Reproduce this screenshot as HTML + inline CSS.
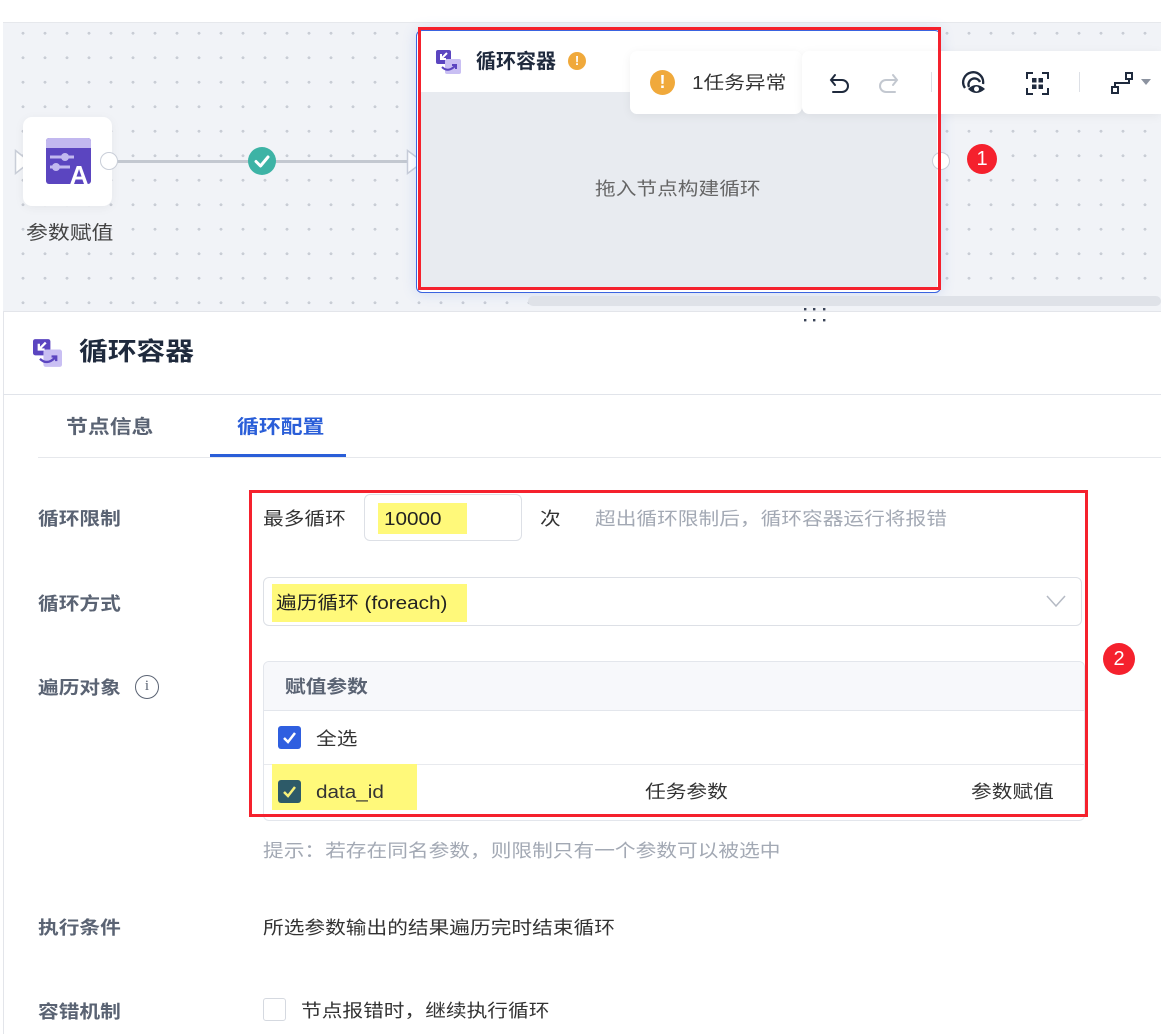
<!DOCTYPE html>
<html><head><meta charset="utf-8">
<style>
*{margin:0;padding:0;box-sizing:border-box}
body{width:1161px;height:1034px;overflow:hidden;background:#fff;font-family:"Liberation Sans","Noto Sans CJK SC",sans-serif;position:relative;color:#333}
.a{position:absolute}
.canvas{left:3px;top:22px;width:1158px;height:289px;background-color:#f1f3f7;
background-image:radial-gradient(circle,#c9cdd5 1.3px,transparent 1.6px);
background-size:22px 24.5px;background-position:9px -2px;border-top:1px solid #e6e8ec}
.lbl{font-size:18px;font-weight:bold;color:#5a6373;left:38px}
.t{white-space:nowrap;line-height:1;transform:translateY(2px) scaleX(1.15);transform-origin:0 0}
.cb{width:23px;height:23px;border-radius:3px}
</style></head><body>
<div class="a" style="left:3px;top:22px;width:1px;height:1012px;background:#e3e5ea"></div>
<div class="a canvas"></div>

<svg class="a" style="left:14px;top:149px" width="18" height="26"><path d="M1.5 1.5 L16 13 L1.5 24.5 Z" fill="#fff" stroke="#c9ced8" stroke-width="1.5"/></svg>
<div class="a" style="left:23px;top:117px;width:89px;height:89px;background:#fff;border-radius:9px;box-shadow:0 2px 10px rgba(0,0,0,.05)"></div>
<svg class="a" style="left:46px;top:138px" width="45" height="46" viewBox="0 0 45 46">
<rect x="0" y="0" width="45" height="46" rx="3" fill="#5b45c0"/>
<rect x="0" y="0" width="45" height="10" rx="3" fill="#c2b8ef"/>
<rect x="0" y="7" width="45" height="3" fill="#c2b8ef"/>
<line x1="4" y1="19" x2="28" y2="19" stroke="#c2b8ef" stroke-width="3"/>
<circle cx="19" cy="19" r="4" fill="#c2b8ef"/>
<line x1="4" y1="29" x2="24" y2="29" stroke="#c2b8ef" stroke-width="3"/>
<circle cx="10" cy="29" r="4" fill="#c2b8ef"/>
<text x="33" y="46" font-family="Liberation Sans" font-weight="bold" font-size="26" fill="#fff" text-anchor="middle">A</text>
</svg>
<div class="a t" style="left:26px;top:222px;font-size:19px;color:#444">参数赋值</div>
<div class="a" style="left:112px;top:160px;width:298px;height:3px;background:#c3c8d0"></div>
<div class="a" style="left:100px;top:152px;width:18px;height:18px;border-radius:50%;background:#fff;border:1.5px solid #c9ced8"></div>
<div class="a" style="left:248px;top:147px;width:28px;height:28px;border-radius:50%;background:#3db3a5"></div>
<svg class="a" style="left:248px;top:147px" width="28" height="28"><path d="M8 14.5 L12.5 19 L20 10" fill="none" stroke="#fff" stroke-width="3" stroke-linecap="round" stroke-linejoin="round"/></svg>
<svg class="a" style="left:406px;top:149px" width="20" height="26"><path d="M1.5 1.5 L17 13 L1.5 24.5 Z" fill="#fff" stroke="#c9ced8" stroke-width="1.5"/></svg>

<div class="a" style="left:416px;top:30px;width:525px;height:263px;border:1.5px solid #3a63e0;border-radius:6px;background:#fff;box-shadow:0 0 14px rgba(80,120,230,.2)"></div>
<div class="a" style="left:421px;top:92px;width:516px;height:196px;background:#e8ebf0"></div>
<svg class="a" style="left:436px;top:50px" width="25" height="24" viewBox="0 0 25 24">
<rect x="0" y="0" width="15" height="14" rx="2" fill="#5b45c0"/>
<rect x="9" y="9" width="16" height="15" rx="2" fill="#c9bff3"/>
<path d="M11 3 L5 9 M5 4 L5 9 L10 9" stroke="#fff" stroke-width="2" fill="none"/>
<path d="M6 17 Q12 23 19 16 M16 15 L20 15 L20 19" stroke="#5b45c0" stroke-width="2" fill="none"/>
</svg>
<div class="a" style="left:476px;top:52px;font-size:20px;font-weight:bold;color:#1f2a3d;white-space:nowrap;line-height:1">循环容器</div>
<div class="a" style="left:568px;top:52px;width:18px;height:18px;border-radius:50%;background:#f0a93b;color:#fff;font-size:13px;font-weight:bold;text-align:center;line-height:18px">!</div>
<div class="a t" style="left:595px;top:178px;font-size:18px;color:#666">拖入节点构建循环</div>
<div class="a" style="left:932px;top:152px;width:18px;height:18px;border-radius:50%;background:#fff;border:1.5px solid #c9ced8"></div>
<div class="a" style="left:967px;top:144px;width:30px;height:30px;border-radius:50%;background:#f5212d;color:#fff;font-size:20px;text-align:center;line-height:30px">1</div>

<div class="a" style="left:630px;top:51px;width:172px;height:63px;background:#fff;border-radius:7px;box-shadow:0 2px 10px rgba(0,0,0,.06)"></div>
<div class="a" style="left:802px;top:51px;width:359px;height:63px;background:#fff;border-radius:7px 0 0 7px;box-shadow:0 2px 10px rgba(0,0,0,.06)"></div>
<div class="a" style="left:650px;top:70px;width:25px;height:25px;border-radius:50%;background:#f0a93b;color:#fff;font-size:18px;font-weight:bold;text-align:center;line-height:25px">!</div>
<div class="a t" style="left:692px;top:72px;font-size:18px;color:#333">1任务异常</div>
<svg class="a" style="left:828px;top:72px" width="24" height="22"><path d="M7 3 L3 8 L7 13 M3 8 H14 A6 6 0 0 1 14 20 H5" fill="none" stroke="#1f2a3d" stroke-width="2" stroke-linecap="round"/></svg>
<svg class="a" style="left:876px;top:72px" width="24" height="22"><path d="M17 3 L21 8 L17 13 M21 8 H10 A6 6 0 0 0 10 20 H19" fill="none" stroke="#c3c8d0" stroke-width="2" stroke-linecap="round"/></svg>
<div class="a" style="left:931px;top:72px;width:1px;height:20px;background:#dde0e6"></div>
<svg class="a" style="left:961px;top:70px" width="26" height="26" viewBox="0 0 26 26"><path d="M4 18 A10 10 0 1 1 22 14" fill="none" stroke="#1f2a3d" stroke-width="2.3"/><path d="M8 17 A6 6 0 1 1 19 12" fill="none" stroke="#1f2a3d" stroke-width="2.3"/><path d="M7 19 Q15 11 24 19 Q15 27 7 19Z" fill="#1f2a3d"/><circle cx="15.5" cy="19" r="2.5" fill="#fff"/></svg>
<svg class="a" style="left:1026px;top:72px" width="23" height="23" viewBox="0 0 23 23"><path d="M1 7V1H7M16 1H22V7M22 16V22H16M7 22H1V16" fill="none" stroke="#1f2a3d" stroke-width="2"/><rect x="6" y="6" width="4.5" height="4.5" fill="#1f2a3d"/><rect x="12.5" y="6" width="4.5" height="4.5" fill="#1f2a3d"/><rect x="6" y="12.5" width="4.5" height="4.5" fill="#1f2a3d"/><rect x="12.5" y="12.5" width="4.5" height="4.5" fill="#1f2a3d"/></svg>
<div class="a" style="left:1079px;top:72px;width:1px;height:20px;background:#dde0e6"></div>
<svg class="a" style="left:1110px;top:71px" width="24" height="24" viewBox="0 0 24 24"><rect x="16" y="2" width="6" height="6" fill="none" stroke="#1f2a3d" stroke-width="2"/><rect x="2" y="16" width="6" height="6" fill="none" stroke="#1f2a3d" stroke-width="2"/><path d="M19 8 V12 H5 V16" fill="none" stroke="#1f2a3d" stroke-width="2"/></svg>
<svg class="a" style="left:1141px;top:79px" width="10" height="7"><path d="M0 0 H10 L5 6Z" fill="#8c93a0"/></svg>

<div class="a" style="left:418px;top:27px;width:523px;height:263px;border:3px solid #f5212d"></div>
<div class="a" style="left:528px;top:296px;width:633px;height:10px;background:#dfe2e8;border-radius:5px"></div>
<svg class="a" style="left:800px;top:305px" width="30" height="20"><g fill="#3a4458"><rect x="4" y="3" width="2.4" height="2.4"/><rect x="13" y="3" width="2.4" height="2.4"/><rect x="23" y="3" width="2.4" height="2.4"/><rect x="4" y="14" width="2.4" height="2.4"/><rect x="13" y="14" width="2.4" height="2.4"/><rect x="23" y="14" width="2.4" height="2.4"/></g></svg>

<div class="a" style="left:3px;top:311px;width:1158px;height:1px;background:#e3e5ea"></div>
<svg class="a" style="left:33px;top:338px" width="29" height="30" viewBox="0 0 25 24">
<rect x="0" y="0" width="15" height="14" rx="2" fill="#5b45c0"/>
<rect x="9" y="9" width="16" height="15" rx="2" fill="#c9bff3"/>
<path d="M11 3 L5 9 M5 4 L5 9 L10 9" stroke="#fff" stroke-width="2" fill="none"/>
<path d="M6 17 Q12 23 19 16 M16 15 L20 15 L20 19" stroke="#5b45c0" stroke-width="2" fill="none"/>
</svg>
<div class="a t" style="left:79px;top:338px;font-size:25px;font-weight:bold;color:#1f2a3d">循环容器</div>
<div class="a" style="left:3px;top:394px;width:1158px;height:1px;background:#e1e4ea"></div>
<div class="a t" style="left:66px;top:416px;font-size:19px;font-weight:bold;color:#5a6373">节点信息</div>
<div class="a t" style="left:237px;top:416px;font-size:19px;font-weight:bold;color:#2a5ed8">循环配置</div>
<div class="a" style="left:38px;top:457px;width:1123px;height:1px;background:#e6e8ec"></div>
<div class="a" style="left:210px;top:454px;width:136px;height:3px;background:#2a5ed8"></div>

<div class="a t lbl" style="top:508px">循环限制</div>
<div class="a t lbl" style="top:593px">循环方式</div>
<div class="a t lbl" style="top:677px">遍历对象</div>
<div class="a" style="left:135px;top:675px;width:24px;height:24px;border-radius:50%;border:1.6px solid #5a6373;color:#5a6373;font-size:15px;text-align:center;line-height:21px;font-family:'Liberation Serif',serif">i</div>
<div class="a t lbl" style="top:917px">执行条件</div>
<div class="a t lbl" style="top:1001px">容错机制</div>

<div class="a t" style="left:263px;top:508px;font-size:18px;color:#333">最多循环</div>
<div class="a" style="left:364px;top:494px;width:158px;height:47px;border:1px solid #dde0e6;border-radius:6px"></div>
<div class="a" style="left:378px;top:503px;width:89px;height:31px;background:#fff97a"></div>
<div class="a t" style="left:384px;top:508px;font-size:18px;color:#222">10000</div>
<div class="a t" style="left:540px;top:508px;font-size:18px;color:#333">次</div>
<div class="a t" style="left:595px;top:508px;font-size:18px;color:#a3a9b4">超出循环限制后，循环容器运行将报错</div>

<div class="a" style="left:263px;top:577px;width:819px;height:49px;border:1px solid #dde0e6;border-radius:6px"></div>
<div class="a" style="left:272px;top:584px;width:195px;height:38px;background:#fff97a"></div>
<div class="a t" style="left:276px;top:592px;font-size:18px;color:#222">遍历循环 (foreach)</div>
<svg class="a" style="left:1046px;top:594px" width="20" height="14"><path d="M1 2 L10 12 L19 2" fill="none" stroke="#b5bac4" stroke-width="1.5"/></svg>

<div class="a" style="left:263px;top:661px;width:822px;height:160px;border:1px solid #e3e6ec;border-radius:6px;overflow:hidden">
 <div style="height:49px;background:#f7f8fb;border-bottom:1px solid #e3e6ec"></div>
 <div style="height:54px;border-bottom:1px solid #e8eaee"></div>
</div>
<div class="a t" style="left:285px;top:676px;font-size:18px;font-weight:bold;color:#5a6373">赋值参数</div>
<div class="a cb" style="left:278px;top:726px;background:#2f5fe0"></div>
<svg class="a" style="left:278px;top:726px" width="23" height="23"><path d="M6 12 L10 16 L17 7" fill="none" stroke="#fff" stroke-width="2.5"/></svg>
<div class="a t" style="left:316px;top:728px;font-size:18px;color:#333">全选</div>
<div class="a" style="left:272px;top:764px;width:145px;height:46px;background:#fff97a"></div>
<div class="a cb" style="left:278px;top:780px;background:#2d5a68"></div>
<svg class="a" style="left:278px;top:780px" width="23" height="23"><path d="M6 12 L10 16 L17 7" fill="none" stroke="#f7f07a" stroke-width="2.5"/></svg>
<div class="a t" style="left:316px;top:781px;font-size:18px;color:#333">data_id</div>
<div class="a t" style="left:645px;top:781px;font-size:18px;color:#333">任务参数</div>
<div class="a t" style="left:971px;top:781px;font-size:18px;color:#333">参数赋值</div>

<div class="a" style="left:249px;top:490px;width:839px;height:327px;border:3px solid #f5212d"></div>
<div class="a" style="left:1103px;top:643px;width:32px;height:32px;border-radius:50%;background:#f5212d;color:#fff;font-size:20px;text-align:center;line-height:32px">2</div>

<div class="a t" style="left:263px;top:840px;font-size:18px;color:#a3a9b4">提示：若存在同名参数，则限制只有一个参数可以被选中</div>
<div class="a t" style="left:263px;top:917px;font-size:18px;color:#333">所选参数输出的结果遍历完时结束循环</div>
<div class="a cb" style="left:263px;top:998px;border:1px solid #d5d9e0;background:#fff"></div>
<div class="a t" style="left:301px;top:1000px;font-size:18px;color:#333">节点报错时，继续执行循环</div>
</body></html>
